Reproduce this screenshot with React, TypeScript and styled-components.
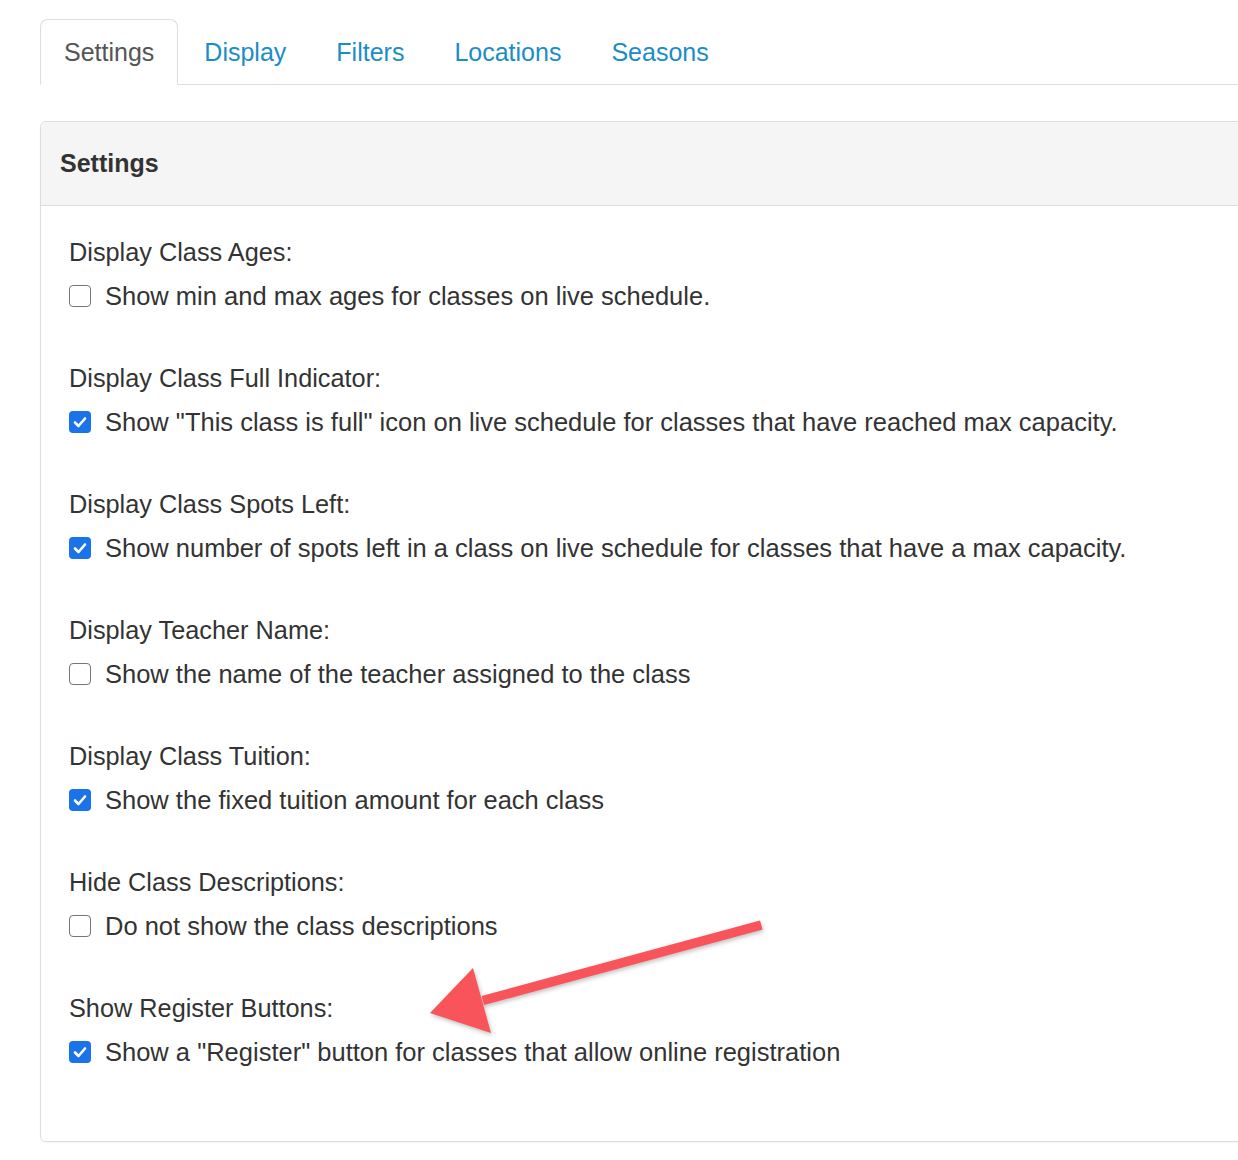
import React from "react";
import styled, { createGlobalStyle } from "styled-components";

const GlobalStyle = createGlobalStyle`
  html, body {
    margin: 0;
    padding: 0;
    background: #fff;
    overflow-x: hidden;
  }
  body {
    font-family: "Liberation Sans", Arial, Helvetica, sans-serif;
    color: #333;
  }
`;

const Page = styled.div`
  position: relative;
  padding: 19px 0 0 40px;
  height: 1160px;
  box-sizing: border-box;
`;

const TabBar = styled.ul`
  display: flex;
  list-style: none;
  margin: 0;
  padding: 0;
  border-bottom: 1px solid #ddd;
`;

const Tab = styled.li<{ $active?: boolean }>`
  margin-right: 2px;
  margin-bottom: -1px;
  height: 64px;
  padding: 0 23px;
  display: flex;
  align-items: center;
  font-size: 25px;
  border: 1px solid ${(p) => (p.$active ? "#ddd" : "transparent")};
  border-bottom-color: ${(p) => (p.$active ? "#fff" : "transparent")};
  border-radius: 8px 8px 0 0;
  background: ${(p) => (p.$active ? "#fff" : "transparent")};
  color: ${(p) => (p.$active ? "#555" : "#1b8dc6")};
  cursor: pointer;
`;

const Panel = styled.section`
  margin-top: 36px;
  margin-right: -10px;
  border: 1px solid #ddd;
  border-radius: 6px;
  box-shadow: 0 1px 2px rgba(0, 0, 0, 0.05);
`;

const PanelHeading = styled.h3`
  margin: 0;
  height: 83px;
  display: flex;
  align-items: center;
  padding: 0 19px;
  font-size: 25px;
  font-weight: bold;
  color: #333;
  background: #f5f5f5;
  border-bottom: 1px solid #ddd;
  border-radius: 6px 6px 0 0;
`;

const PanelBody = styled.div`
  padding: 28px 28px 71px;
  display: flex;
  flex-direction: column;
  gap: 46px;
`;

const Group = styled.div`
  display: flex;
  flex-direction: column;
  gap: 8px;
`;

const Label = styled.div`
  font-size: 25.3px;
  line-height: 36px;
`;

const CheckRow = styled.label`
  display: flex;
  align-items: center;
  gap: 14px;
  font-size: 25.5px;
  line-height: 36px;
  cursor: pointer;
`;

const Box = styled.span<{ $checked?: boolean }>`
  flex: none;
  width: 22px;
  height: 22px;
  box-sizing: border-box;
  border-radius: 4px;
  border: ${(p) => (p.$checked ? "none" : "1.5px solid #767676")};
  background: ${(p) => (p.$checked ? "#1a73e8" : "#fff")};
  display: flex;
  align-items: center;
  justify-content: center;
`;

const Arrow = styled.svg`
  position: absolute;
  left: 0;
  top: 0;
  pointer-events: none;
  filter: drop-shadow(1px 2px 2px rgba(0, 0, 0, 0.25));
`;

const settings = [
  { label: "Display Class Ages:", text: "Show min and max ages for classes on live schedule.", checked: false },
  { label: "Display Class Full Indicator:", text: 'Show "This class is full" icon on live schedule for classes that have reached max capacity.', checked: true },
  { label: "Display Class Spots Left:", text: "Show number of spots left in a class on live schedule for classes that have a max capacity.", checked: true },
  { label: "Display Teacher Name:", text: "Show the name of the teacher assigned to the class", checked: false },
  { label: "Display Class Tuition:", text: "Show the fixed tuition amount for each class", checked: true },
  { label: "Hide Class Descriptions:", text: "Do not show the class descriptions", checked: false },
  { label: "Show Register Buttons:", text: 'Show a "Register" button for classes that allow online registration', checked: true },
];

const tabs = ["Settings", "Display", "Filters", "Locations", "Seasons"];

const Checkbox = ({ checked }: { checked: boolean }) => (
  <Box $checked={checked}>
    {checked && (
      <svg width="14" height="12" viewBox="0 0 14 12">
        <path d="M2 6.5 L5.5 10 L12 2.5" fill="none" stroke="#fff" strokeWidth="2.6" strokeLinecap="round" strokeLinejoin="round" />
      </svg>
    )}
  </Box>
);

export default function App() {
  return (
    <>
      <GlobalStyle />
      <Page>
        <TabBar>
          {tabs.map((t, i) => (
            <Tab key={t} $active={i === 0}>
              {t}
            </Tab>
          ))}
        </TabBar>

        <Panel>
          <PanelHeading>Settings</PanelHeading>
          <PanelBody>
            {settings.map((s) => (
              <Group key={s.label}>
                <Label>{s.label}</Label>
                <CheckRow>
                  <Checkbox checked={s.checked} />
                  <span>{s.text}</span>
                </CheckRow>
              </Group>
            ))}
          </PanelBody>
        </Panel>

        <Arrow width="1238" height="1160" viewBox="0 0 1238 1160">
          <path d="M760 920.5 L762.5 929.5 L484 1005 L481.5 996 Z" fill="#f9545a" />
          <path d="M430 1013 L473 968 L491 1033 Z" fill="#f9545a" />
        </Arrow>
      </Page>
    </>
  );
}
